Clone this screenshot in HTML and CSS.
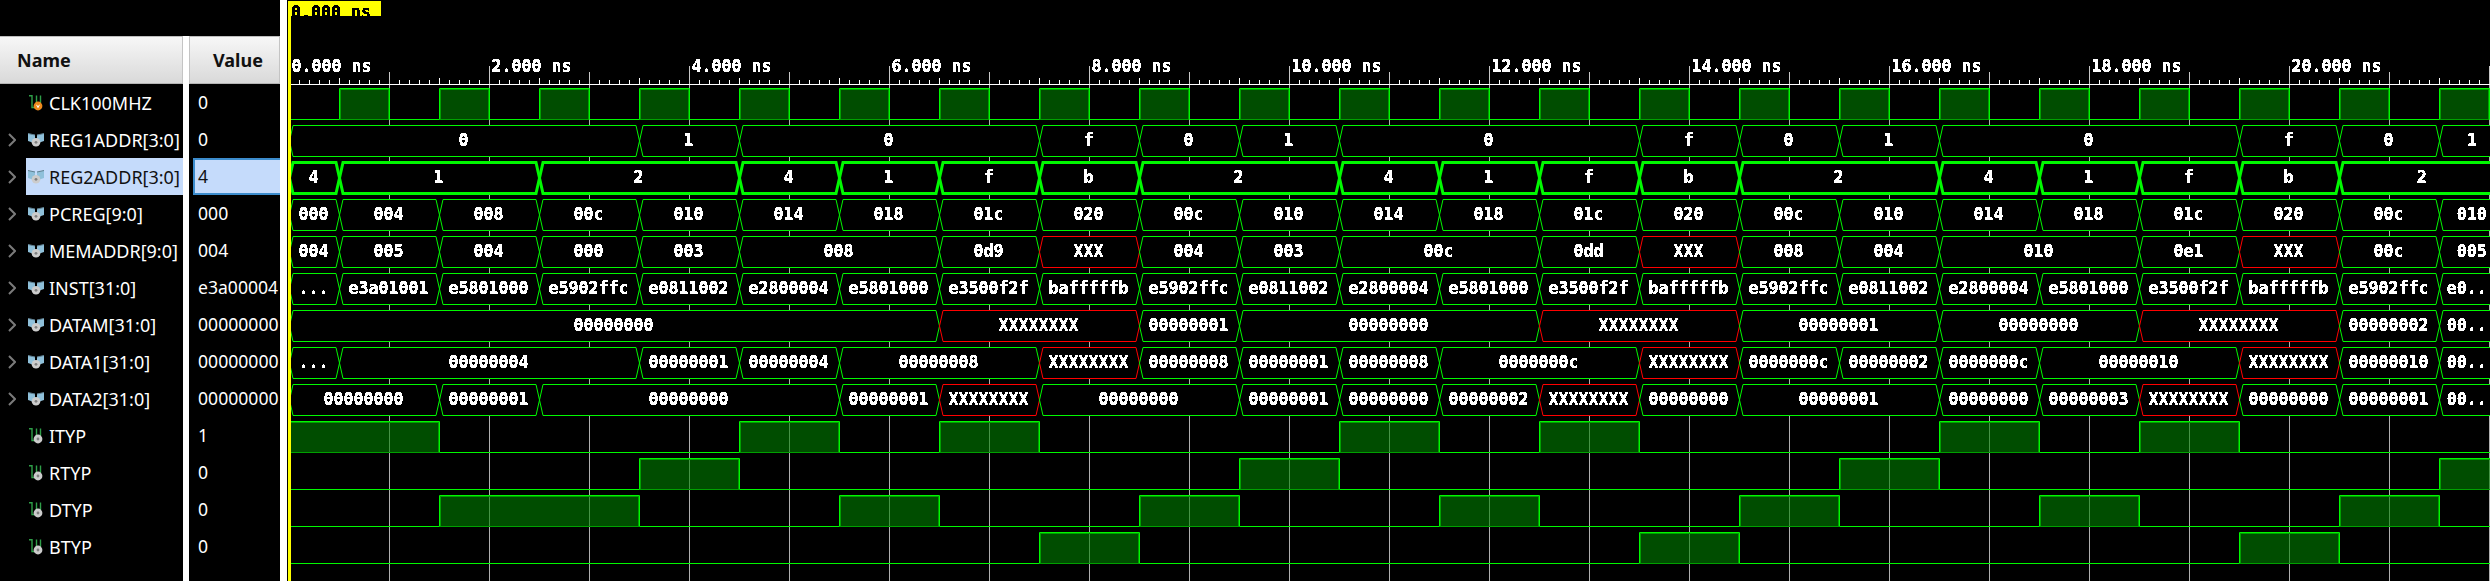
FILE: index.html
```html
<!DOCTYPE html>
<html lang="en">

<head>
    <meta charset="UTF-8">
    <title>Waveform viewer</title>
    <link rel="stylesheet" href="styles.css">
</head>

<body>
    <svg class="defs">
        <symbol id="bus" viewBox="0 0 16 14">
            <path d="M0 0.5L7 2V7L4.5 9.5L0 8Z" fill="#8fc0da" />
            <path d="M16 0.5L9 2V7L11.5 9.5L16 8Z" fill="#8fc0da" />
            <path d="M0 0.5L7 2M16 0.5L9 2" stroke="#5f7f90" fill="none" />
            <circle cx="8" cy="9.3" r="4.3" fill="#cccccc" />
            <circle cx="8" cy="9.3" r="1.4" fill="#808080" />
        </symbol>
        <symbol id="bit" viewBox="0 0 16 16">
            <path d="M1 0.8H4V12.5H8M8.5 0.5V8M12.5 0.5V8" stroke="#2e9e48" stroke-width="1.4" fill="none" />
            <circle cx="10" cy="11" r="4.4" fill="#cccccc" />
            <circle cx="10" cy="11" r="1.4" fill="#808080" />
        </symbol>
        <symbol id="clk" viewBox="0 0 16 16">
            <path d="M1 0.8H4V12.5H8M8.5 0.5V8M12.5 0.5V8" stroke="#2e9e48" stroke-width="1.4" fill="none" />
            <circle cx="10" cy="11" r="4.4" fill="#ef8a1d" />
            <path d="M8.6 9.8L10 12.6L11.4 9.8" stroke="#fff" fill="none" />
        </symbol>
        <symbol id="chevron" viewBox="0 0 8 14">
            <path d="M1 1L7 7L1 13" stroke="#7a7a7a" stroke-width="2" fill="none" />
        </symbol>
    </svg>

    <div class="viewer">
        <div class="col col-name">
            <div class="head head-name">Name</div>
            <div class="row"><span class="arrow"></span><div class="cell"><svg class="icon"><use href="#clk" /></svg>CLK100MHZ</div></div>
            <div class="row"><svg class="arrow"><use href="#chevron" /></svg><div class="cell"><svg class="icon"><use href="#bus" /></svg>REG1ADDR[3:0]</div></div>
            <div class="row"><svg class="arrow"><use href="#chevron" /></svg><div class="cell selected"><svg class="icon"><use href="#bus" /></svg>REG2ADDR[3:0]</div></div>
            <div class="row"><svg class="arrow"><use href="#chevron" /></svg><div class="cell"><svg class="icon"><use href="#bus" /></svg>PCREG[9:0]</div></div>
            <div class="row"><svg class="arrow"><use href="#chevron" /></svg><div class="cell"><svg class="icon"><use href="#bus" /></svg>MEMADDR[9:0]</div></div>
            <div class="row"><svg class="arrow"><use href="#chevron" /></svg><div class="cell"><svg class="icon"><use href="#bus" /></svg>INST[31:0]</div></div>
            <div class="row"><svg class="arrow"><use href="#chevron" /></svg><div class="cell"><svg class="icon"><use href="#bus" /></svg>DATAM[31:0]</div></div>
            <div class="row"><svg class="arrow"><use href="#chevron" /></svg><div class="cell"><svg class="icon"><use href="#bus" /></svg>DATA1[31:0]</div></div>
            <div class="row"><svg class="arrow"><use href="#chevron" /></svg><div class="cell"><svg class="icon"><use href="#bus" /></svg>DATA2[31:0]</div></div>
            <div class="row"><span class="arrow"></span><div class="cell"><svg class="icon"><use href="#bit" /></svg>ITYP</div></div>
            <div class="row"><span class="arrow"></span><div class="cell"><svg class="icon"><use href="#bit" /></svg>RTYP</div></div>
            <div class="row"><span class="arrow"></span><div class="cell"><svg class="icon"><use href="#bit" /></svg>DTYP</div></div>
            <div class="row"><span class="arrow"></span><div class="cell"><svg class="icon"><use href="#bit" /></svg>BTYP</div></div>
        </div>

        <div class="col col-value">
            <div class="head head-value">Value</div>
            <div class="val">0</div>
            <div class="val">0</div>
            <div class="val val-selected">4</div>
            <div class="val">000</div>
            <div class="val">004</div>
            <div class="val">e3a00004</div>
            <div class="val">00000000</div>
            <div class="val">00000000</div>
            <div class="val">00000000</div>
            <div class="val">1</div>
            <div class="val">0</div>
            <div class="val">0</div>
            <div class="val">0</div>
        </div>

        <svg id="wave" class="wave" viewBox="287 0 2203 581"></svg>
    </div>

    <script src="wave.js"></script>
</body>

</html>
```

FILE: styles.css
```css
html,
body {
    margin: 0;
    height: 100%;
    overflow: hidden;
    background-color: #000;
}

.defs {
    display: none;
}

/* the gradients are the white strips between the columns */
.viewer {
    display: flex;
    height: 581px;
    font-family: "Noto Sans", sans-serif;
    font-size: 18px;
    color: #fff;
    background: linear-gradient(#000 36px, #fff 36px) 183px 0 / 6px 100% no-repeat,
        linear-gradient(#fff, #fff) 280px 0 / 7px 100% no-repeat,
        #000;
}

.col {
    padding-top: 36px;
}

.col-name {
    width: 183px;
}

.col-value {
    width: 91px;
    margin-left: 6px;
    margin-right: 7px;
}

.head {
    box-sizing: border-box;
    height: 48px;
    line-height: 46px;
    font-weight: bold;
    color: #111;
    background: linear-gradient(#f7f7f7, #d9d9d9);
    border-top: 1px solid #bdbdbd;
    border-bottom: 1px solid #b5b5b5;
}

.head-name {
    padding-left: 17px;
    border-right: 1px solid #c4c4c4;
}

.head-value {
    padding-left: 23px;
    border-left: 1px solid #c4c4c4;
    border-right: 1px solid #c4c4c4;
}

.row {
    display: flex;
    height: 37px;
}

.arrow {
    flex: none;
    width: 8px;
    height: 14px;
    margin: 12px 10px 11px 8px;
}

.cell {
    flex: 1;
    display: flex;
    align-items: center;
    padding-left: 2px;
}

.icon {
    flex: none;
    width: 16px;
    height: 16px;
    margin-right: 5px;
}

.selected {
    background-color: #c5dbfb;
    color: #111;
}

.val {
    box-sizing: border-box;
    height: 37px;
    line-height: 37px;
    padding-left: 9px;
    font-size: 17.6px;
}

.val-selected {
    margin-left: 4px;
    padding-left: 3px;
    line-height: 33px;
    background-color: #c5dbfb;
    border: 2px solid #3c8ccc;
    border-right: none;
    color: #111;
}

.wave {
    flex: none;
    width: 2203px;
    height: 581px;
}

.wave text {
    font-family: "DejaVu Sans Mono", monospace;
    font-weight: bold;
    font-size: 16.6px;
    fill: #fff;
}

.wave .seg-text {
    text-anchor: middle;
}

.wave .cursor-text {
    fill: #000;
}

.grid {
    stroke: #b0b0b0;
}

.tick {
    stroke: #fff;
}

.tick-major {
    stroke: #c8c8c8;
}

.high {
    fill: rgba(0, 128, 0, 0.6);
    stroke: #00a000;
}

.line {
    fill: none;
    stroke: #00f800;
}

.bus {
    fill: #000;
    stroke: #00f800;
}

.bus-x {
    stroke: #ff0000;
}

.bus-sel {
    stroke-width: 3;
}

.cursor {
    fill: #ff0;
}
```

FILE: wave.js
```js
const T0 = 289.5;       // x of 0 ns
const EDGE0 = 339.5;    // first rising clock edge
const CYCLE = 100;
const XEND = 2506;
const ROW0 = 84;
const ROWH = 37;
const NS = 'http://www.w3.org/2000/svg';

const svg = document.getElementById('wave');

function add(parent, tag, attrs, text) {
    const el = document.createElementNS(NS, tag);
    for (const k in attrs) el.setAttribute(k, attrs[k]);
    if (text) el.textContent = text;
    parent.appendChild(el);
    return el;
}

// the glyphs of the viewer are a bit taller than the font
function addText(parent, cls, x, y, text) {
    return add(parent, 'text', { class: cls, transform: `translate(${x} ${y}) scale(1 1.08)` }, text);
}

function edge(n) {
    return EDGE0 + n * CYCLE;
}

// label or label:cycles, 1 cycle if not given
const busRows = {
    1: ['0:3.5', '1', '0:3', 'f', '0', '1', '0:3', 'f', '0', '1', '0:3', 'f', '0', '1'],
    2: ['4:.5', '1:2', '2:2', '4', '1', 'f', 'b', '2:2', '4', '1', 'f', 'b', '2:2', '4', '1', 'f', 'b', '2:2'],
    3: ['000:.5', '004', '008', '00c', '010', '014', '018', '01c', '020', '00c', '010', '014', '018', '01c', '020', '00c', '010', '014', '018', '01c', '020', '00c', '010'],
    4: ['004:.5', '005', '004', '000', '003', '008:2', '0d9', 'XXX', '004', '003', '00c:2', '0dd', 'XXX', '008', '004', '010:2', '0e1', 'XXX', '00c', '005'],
    5: ['...:.5', 'e3a01001', 'e5801000', 'e5902ffc', 'e0811002', 'e2800004', 'e5801000', 'e3500f2f', 'bafffffb', 'e5902ffc', 'e0811002', 'e2800004', 'e5801000', 'e3500f2f', 'bafffffb', 'e5902ffc', 'e0811002', 'e2800004', 'e5801000', 'e3500f2f', 'bafffffb', 'e5902ffc', 'e0...'],
    6: ['00000000:6.5', 'XXXXXXXX:2', '00000001', '00000000:3', 'XXXXXXXX:2', '00000001:2', '00000000:2', 'XXXXXXXX:2', '00000002', '00...'],
    7: ['...:.5', '00000004:3', '00000001', '00000004', '00000008:2', 'XXXXXXXX', '00000008', '00000001', '00000008', '0000000c:2', 'XXXXXXXX', '0000000c', '00000002', '0000000c', '00000010:2', 'XXXXXXXX', '00000010', '00...'],
    8: ['00000000:1.5', '00000001', '00000000:3', '00000001', 'XXXXXXXX', '00000000:2', '00000001', '00000000', '00000002', 'XXXXXXXX', '00000000', '00000001:2', '00000000', '00000003', 'XXXXXXXX', '00000000', '00000001', '00...']
};

// high phases of the single bit rows, as clock edge numbers
const clock = [];
for (let n = 0; n < 22; n++) clock.push([n, n + 0.5]);

const bitRows = {
    0: clock,
    9: [[-0.5, 1], [4, 5], [6, 7], [10, 11], [12, 13], [16, 17], [18, 19]],
    10: [[3, 4], [9, 10], [15, 16], [21, 23]],
    11: [[1, 3], [5, 6], [8, 9], [11, 12], [14, 15], [17, 18], [20, 21]],
    12: [[7, 8], [13, 14], [19, 20]]
};

function drawGrid() {
    for (let x = T0 + CYCLE; x < 2490; x += CYCLE) {
        add(svg, 'line', { class: 'grid', x1: x, x2: x, y1: 85, y2: 581 });
    }
}

function drawAxis() {
    add(svg, 'line', { class: 'tick', x1: 291, x2: 2490, y1: 84.5, y2: 84.5 });
    for (let i = 1; T0 + i * 10 < 2490; i++) {
        const x = T0 + i * 10;
        if (i % 10 === 0) {
            const top = i % 20 === 0 ? 66 : 72;
            add(svg, 'line', { class: 'tick tick-major', x1: x, x2: x, y1: top, y2: 84 });
        } else {
            add(svg, 'line', { class: 'tick', x1: x, x2: x, y1: i % 5 === 0 ? 78 : 80, y2: 84 });
        }
    }
    const labels = add(svg, 'g', { filter: 'url(#crisp)' });
    for (let ns = 0; ns <= 20; ns += 2) {
        addText(labels, 'axis-text', T0 + ns * CYCLE + 2, 72, ns.toFixed(3) + ' ns');
    }
}

function drawBit(row, highs) {
    const top = ROW0 + row * ROWH + 4.5;
    const low = ROW0 + row * ROWH + 35.5;
    let d = 'M' + T0 + ' ' + low;
    highs.forEach(([a, b]) => {
        const x1 = edge(a);
        const x2 = Math.min(edge(b), XEND);
        // inset by 1 so the dim outline sits inside the bright line
        add(svg, 'rect', { class: 'high', x: x1 + 1, y: top + 1, width: x2 - x1 - 2, height: low - top - 1 });
        d += 'L' + x1 + ' ' + low + 'V' + top + 'H' + x2 + 'V' + low + 'M' + x2 + ' ' + low;
    });
    d += 'H' + XEND;
    add(svg, 'path', { class: 'line', d: d });
}

function drawBus(row, segs, labels) {
    const y = ROW0 + row * ROWH;
    const top = y + 4.5;
    const bot = y + 35.5;
    const mid = y + 20;
    const slant = 3.5;
    let x1 = T0;
    segs.forEach((seg, i) => {
        const [label, cycles] = seg.split(':');
        const last = i === segs.length - 1;
        const x2 = last ? XEND : x1 + (cycles ? parseFloat(cycles) : 1) * CYCLE;
        let cls = 'bus';
        if (label[0] === 'X') cls += ' bus-x';
        if (row === 2) cls += ' bus-sel';
        const pts = [[x1, mid], [x1 + slant, top], [x2 - slant, top], [x2, mid], [x2 - slant, bot], [x1 + slant, bot]];
        add(svg, 'polygon', { class: cls, points: pts.join(' ') });
        addText(labels, 'seg-text', (x1 + x2) / 2 - 1, y + 25, label);
        x1 = x2;
    });
}

function drawCursor() {
    add(svg, 'rect', { class: 'cursor', x: 288, y: 1, width: 3, height: 580 });
    add(svg, 'rect', { class: 'cursor', x: 288, y: 1, width: 93, height: 15 });
    const g = add(svg, 'g', { 'clip-path': 'url(#markerclip)', filter: 'url(#crisp)' });
    addText(g, 'cursor-text', 291, 17.5, '0.000 ns');
}

const defs = add(svg, 'defs', {});
const crisp = add(defs, 'filter', { id: 'crisp', filterUnits: 'userSpaceOnUse', x: 287, y: 0, width: 2203, height: 581 });
const transfer = add(crisp, 'feComponentTransfer', {});
add(transfer, 'feFuncA', { type: 'discrete', tableValues: '0 1 1 1' });
const clip = add(defs, 'clipPath', { id: 'markerclip' });
add(clip, 'rect', { x: 288, y: 1, width: 93, height: 15 });

drawGrid();
for (const r in bitRows) drawBit(Number(r), bitRows[r]);
const textLayer = document.createElementNS(NS, 'g');
textLayer.setAttribute('filter', 'url(#crisp)');
for (const r in busRows) drawBus(Number(r), busRows[r], textLayer);
svg.appendChild(textLayer);
drawAxis();
drawCursor();
```
